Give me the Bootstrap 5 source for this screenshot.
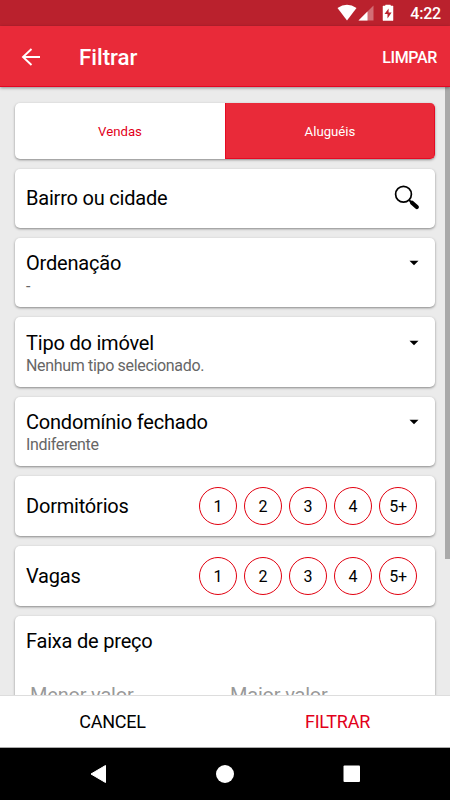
<!DOCTYPE html>
<html lang="pt-BR">
<head>
<meta charset="utf-8">
<meta name="viewport" content="width=device-width, initial-scale=1">
<title>Filtrar</title>
<link href="https://cdn.jsdelivr.net/npm/bootstrap@5.3.0/dist/css/bootstrap.min.css" rel="stylesheet">
<style>
body{font-family:Roboto,"Liberation Sans",sans-serif;background:#ebebeb;color:#000;height:800px;line-height:1.2}
svg{display:block;flex:none}
.status-bar{height:26px;background:#ba212d;padding:0 9px 0 0;font-size:16px;letter-spacing:-.2px;font-weight:500;flex:none}
.clock{padding-top:2px}
.app-bar{height:61px;background:#e92a39;border-bottom:1px solid #e40522;padding:0 13px 0 21px;box-shadow:0 1px 3px rgba(0,0,0,.4);z-index:2;flex:none}
.app-title{font-size:22.300px;font-weight:500;margin-left:38px;padding-top:3px}
.app-clear{font-size:16px;letter-spacing:-.35px;font-weight:500;padding-top:3px}
.filters{padding:16px 10px 0 15px;gap:10px;min-height:0}
.panel{background:#fff;border-radius:5px;box-shadow:0 1px 2.5px rgba(0,0,0,.42);padding:0 16px 0 11px;flex:none}
.tabs-panel{height:56px;padding:0}
.tab-item{background:none;border:0;border-radius:0;font-size:13.200px;padding:2px 0 0;color:#e2001a}
.tab-item.active{background:#e92a39;color:#fff;border:1px solid #e60a22;border-width:0 1px 1px;border-radius:0 5px 5px 0}
.search-panel{height:59px;padding-right:15px}
.search-panel .panel-title{margin-top:-1px}
.select-panel{height:69.3px;padding-top:13.400px}
.count-panel{height:60px;padding-right:18px}
.count-panel .panel-title{padding-top:1px}
.price-panel{height:130px;padding-top:13px}
.panel-title{font-size:20px;letter-spacing:-.2px;line-height:24px}
.panel-value{font-size:16px;letter-spacing:-.33px;line-height:20px;color:#666;margin-top:1.300px}
.counts{gap:7px}
.round{width:38px;height:38px;border:1.200px solid #e2000f;font-size:16px;letter-spacing:-.2px;padding-top:1px}
.range{margin:30px 0 0 4px;font-size:20px;letter-spacing:-.2px;line-height:24px;color:#999}
.range-field{width:200px;flex:none}
.track{width:5px;flex:none}
.thumb{height:472px;background:#a9a9a9}
.actions{height:53px;background:#fff;border-top:1px solid #ddd;border-bottom:1px solid #aaa;font-size:18px;letter-spacing:-.25px;flex:none}
.go{color:#e2001a}
.system-nav{height:52px;background:#000;flex:none}
</style>
<script src="https://cdn.jsdelivr.net/npm/bootstrap@5.3.0/dist/js/bootstrap.bundle.min.js"></script>
</head>
<body class="d-flex flex-column overflow-hidden">
<div class="status-bar d-flex align-items-center justify-content-end text-white">
  <svg width="84" height="26" viewBox="0 0 84 26"><path d="M11.500 8Q21 1.500 30.500 8L21 20.500Z" fill="#fff"/><path d="M32.500 20.500L47.500 5.500V20.500Z" fill="#fff" opacity=".35"/><path d="M32.500 20.500L41.500 11.500V20.500Z" fill="#fff"/><path d="M57 6H59.500V5H64.500V6H67V20.500H57Z" fill="#fff" stroke="#fff" stroke-width=".5" stroke-linejoin="round"/><path d="M62.600 8.500L58.500 14H61.500V18.500L65.600 12.500H62.600Z" fill="#ba212d"/></svg>
  <span class="clock">4:22</span>
</div>
<header class="app-bar d-flex align-items-center text-white position-relative">
  <svg width="20" height="22" viewBox="0 0 20 22" fill="none" stroke="#fff" stroke-width="1.900"><path d="M19 12H2M10.500 4L2 12L10.500 20"/></svg>
  <h1 class="app-title mb-0">Filtrar</h1>
  <span class="app-clear ms-auto">LIMPAR</span>
</header>
<main class="d-flex flex-grow-1 overflow-hidden">
  <div class="filters d-flex flex-column flex-grow-1">
    <div class="panel tabs-panel d-flex"><button class="tab-item w-50">Vendas</button><button class="tab-item active w-50">Aluguéis</button></div>
    <div class="panel search-panel d-flex align-items-center justify-content-between">
      <span class="panel-title">Bairro ou cidade</span>
      <svg width="26" height="28" viewBox="0 0 26 28" fill="none" stroke="#000"><circle cx="9.500" cy="9.300" r="7.900" stroke-width="1.700"/><path d="M15 15L18 17.800" stroke-width="1.800"/><path d="M18 17.700L22.800 22" stroke-width="4.200" stroke-linecap="round"/></svg>
    </div>
    <div class="panel select-panel"><div class="d-flex align-items-center justify-content-between"><span class="panel-title">Ordenação</span><svg width="10" height="6" viewBox="0 0 10 6"><path d="M.5 .8H9.500L5 5.300Z"/></svg></div><div class="panel-value">-</div></div>
    <div class="panel select-panel"><div class="d-flex align-items-center justify-content-between"><span class="panel-title">Tipo do imóvel</span><svg width="10" height="6" viewBox="0 0 10 6"><path d="M.5 .8H9.500L5 5.300Z"/></svg></div><div class="panel-value">Nenhum tipo selecionado.</div></div>
    <div class="panel select-panel"><div class="d-flex align-items-center justify-content-between"><span class="panel-title">Condomínio fechado</span><svg width="10" height="6" viewBox="0 0 10 6"><path d="M.5 .8H9.500L5 5.300Z"/></svg></div><div class="panel-value">Indiferente</div></div>
    <div class="panel count-panel d-flex align-items-center justify-content-between"><span class="panel-title">Dormitórios</span>
      <div class="d-flex counts"><span class="round rounded-circle d-flex align-items-center justify-content-center">1</span><span class="round rounded-circle d-flex align-items-center justify-content-center">2</span><span class="round rounded-circle d-flex align-items-center justify-content-center">3</span><span class="round rounded-circle d-flex align-items-center justify-content-center">4</span><span class="round rounded-circle d-flex align-items-center justify-content-center">5+</span></div></div>
    <div class="panel count-panel d-flex align-items-center justify-content-between"><span class="panel-title">Vagas</span>
      <div class="d-flex counts"><span class="round rounded-circle d-flex align-items-center justify-content-center">1</span><span class="round rounded-circle d-flex align-items-center justify-content-center">2</span><span class="round rounded-circle d-flex align-items-center justify-content-center">3</span><span class="round rounded-circle d-flex align-items-center justify-content-center">4</span><span class="round rounded-circle d-flex align-items-center justify-content-center">5+</span></div></div>
    <div class="panel price-panel"><div class="panel-title">Faixa de preço</div><div class="range d-flex"><span class="range-field">Menor valor</span><span>Maior valor</span></div></div>
  </div>
  <div class="track"><div class="thumb"></div></div>
</main>
<footer class="actions d-flex align-items-center text-center"><span class="w-50">CANCEL</span><span class="w-50 go">FILTRAR</span></footer>
<nav class="system-nav"><svg width="450" height="52" viewBox="0 0 450 52" fill="#fff"><path d="M91 26L105.500 17.500V34.500Z" stroke="#fff" stroke-linejoin="round"/><circle cx="225" cy="26" r="9"/><rect x="343.500" y="17.500" width="16.500" height="16.500" rx="1"/></svg></nav>
</body>
</html>
